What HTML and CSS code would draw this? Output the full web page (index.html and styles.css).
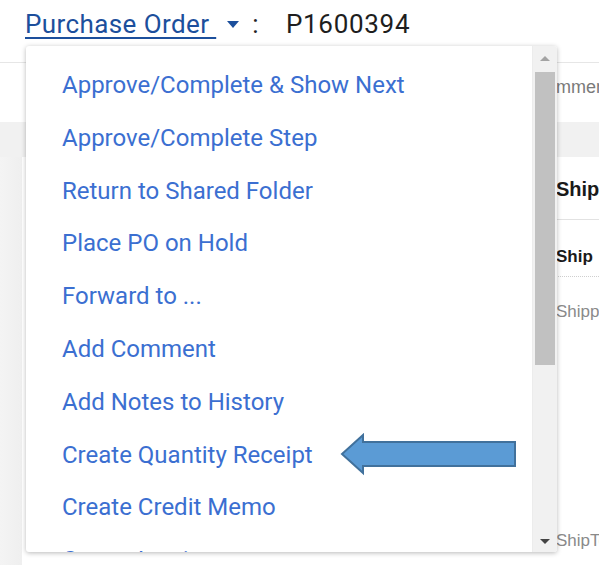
FILE: index.html
```html
<!DOCTYPE html>
<html lang="en">
<head>
<meta charset="utf-8">
<title>Purchase Order P1600394</title>
<link rel="stylesheet" href="styles.css">
</head>
<body>
<header class="title-bar">
  <a class="doc-type" href="#">Purchase Order </a>
  <span class="caret"></span>
  <span class="colon">:</span>
  <span class="doc-id">P1600394</span>
</header>

<main class="page">
  <div class="row tabs-row">
    <div class="side"></div>
    <div class="panel"><span class="tab-label">Comments</span></div>
  </div>
  <div class="row band"></div>
  <div class="row body-row">
    <div class="side strip"></div>
    <div class="panel">
      <div class="sec-title">Ship</div>
      <div class="sub-title">Ship</div>
      <div class="muted">Shipping address</div>
      <div class="spacer"></div>
      <div class="muted foot">ShipTo</div>
    </div>
  </div>

  <div class="menu">
    <ul class="menu-list">
      <li>Approve/Complete &amp; Show Next</li>
      <li>Approve/Complete Step</li>
      <li>Return to Shared Folder</li>
      <li>Place PO on Hold</li>
      <li>Forward to ...</li>
      <li>Add Comment</li>
      <li>Add Notes to History</li>
      <li>Create Quantity Receipt</li>
      <li>Create Credit Memo</li>
      <li>Create Invoice</li>
    </ul>
    <div class="scrollbar">
      <span class="sb-up"></span>
      <span class="sb-thumb"></span>
      <span class="sb-down"></span>
    </div>
  </div>

  <svg class="callout" width="178" height="44" viewBox="0 0 178 44">
    <path d="M2 21 L23 2 L23 9 L175 9 L175 33 L23 33 L23 40 Z" fill="#5b9bd5" stroke="#41719c" stroke-width="2" stroke-linejoin="miter"/>
  </svg>
</main>
</body>
</html>
```

FILE: styles.css
```css
html, body {
  margin: 0;
  padding: 0;
}

body {
  width: 599px;
  height: 565px;
  overflow: hidden;
  background: #ffffff;
  font-family: "Liberation Sans", Arial, sans-serif;
  position: relative;
}

/* heading line with the document type and number */
.title-bar {
  height: 63px;
  padding-left: 25px;
  display: flex;
  align-items: flex-start;
  box-sizing: border-box;
  padding-top: 9px;
  font-family: Roboto, "Noto Sans", sans-serif;
  font-size: 26px;
  letter-spacing: 0.4px;
  border-bottom: 1px solid #e6e6e6;
}

.doc-type {
  color: #1c4f9c;
  text-decoration: underline;
  text-decoration-thickness: 2px;
  text-underline-offset: 4px;
  white-space: pre;
}

.caret {
  width: 0;
  height: 0;
  border-left: 6px solid transparent;
  border-right: 6px solid transparent;
  border-top: 7px solid #1c4f9c;
  margin: 12px 0 0 11px;
}

.colon {
  color: #222;
  margin-left: 13px;
}

.doc-id {
  color: #1e1e1e;
  margin-left: 27px;
  letter-spacing: 0.7px;
}

/* page content underneath the menu */
.page {
  position: relative;
}

.row {
  display: flex;
}

.side {
  flex: 1;
}

.panel {
  width: 43px;
  white-space: nowrap;
}

.tabs-row {
  height: 59px;
}

.tab-label {
  display: block;
  margin-left: -23px;
  padding-top: 14px;
  color: #7a7a7a;
  font-size: 18px;
}

.band {
  height: 35px;
  background: #f1f1f1;
}

.body-row {
  height: 420px;
}

.strip {
  flex: none;
  width: 22px;
  margin-right: auto;
  background: linear-gradient(to right, #f4f4f4, #efefef);
}

.sec-title {
  padding-top: 21px;
  height: 41px;
  font-size: 20px;
  font-weight: bold;
  color: #1a1a1a;
  border-bottom: 1px solid #e2e2e2;
}

.sub-title {
  padding-top: 27px;
  height: 29px;
  font-size: 17px;
  font-weight: bold;
  color: #1a1a1a;
  border-bottom: 1px dotted #cfcfcf;
}

.muted {
  color: #8a8a8a;
  font-size: 17px;
  padding-top: 25px;
}

.spacer {
  height: 194px;
}

.foot {
  padding-top: 15px;
}

/* action drop-down menu */
.menu {
  position: absolute;
  left: 26px;
  top: -17px;
  width: 531px;
  height: 506px;
  background: #ffffff;
  border-radius: 3px;
  box-shadow: 0 1px 5px rgba(0, 0, 0, 0.28);
  display: flex;
  overflow: hidden;
}

.menu-list {
  flex: 1;
  list-style: none;
  margin: 0;
  padding: 13px 0 0 36px;
  font-family: Roboto, "Noto Sans", sans-serif;
  font-size: 24px;
  color: #3b6fd1;
}

.menu-list li {
  height: 52.8px;
  line-height: 52.8px;
  white-space: nowrap;
}

.scrollbar {
  width: 24px;
  background: #f1f1f1;
  border-left: 1px solid #ececec;
  display: flex;
  flex-direction: column;
  align-items: center;
}

.sb-up {
  width: 0;
  height: 0;
  margin-top: 10px;
  border-left: 5px solid transparent;
  border-right: 5px solid transparent;
  border-bottom: 5px solid #a3a3a3;
}

.sb-thumb {
  width: 20px;
  height: 293px;
  margin-top: 11px;
  background: #c1c1c1;
}

.sb-down {
  width: 0;
  height: 0;
  margin-top: auto;
  margin-bottom: 8px;
  border-left: 5px solid transparent;
  border-right: 5px solid transparent;
  border-top: 5px solid #444;
}

/* callout pointing at the receipt action */
.callout {
  position: absolute;
  left: 340px;
  top: 370px;
}
```
